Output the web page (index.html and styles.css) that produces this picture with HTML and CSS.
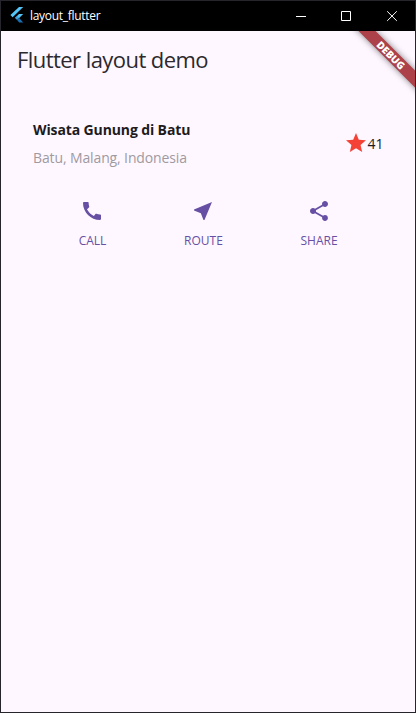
FILE: index.html
```html
<!DOCTYPE html>
<html lang="en">
<head>
<meta charset="utf-8">
<title>layout_flutter</title>
<link rel="stylesheet" href="styles.css">
</head>
<body>
<div class="window">
  <header class="titlebar">
    <svg class="logo" width="14" height="16" viewBox="0 0 14 16"><path fill="#54c5f8" d="M9 0H13.2L2.6 10.2L.4 8Z"/><path fill="#54c5f8" d="M9 7H13.2L9.2 11L5 11Z"/><path fill="#3aa0dc" d="M5 11L7.1 8.9L9.2 11L7.1 13.1Z"/><path fill="#1b6fb0" d="M7.1 13.1L9.2 11L13.2 15.4H9.2Z"/></svg>
    <span class="caption">layout_flutter</span>
    <div class="controls">
      <svg width="46" height="29" viewBox="0 0 46 29"><path d="M19 14.5H29"/></svg>
      <svg width="46" height="29" viewBox="0 0 46 29"><path d="M18.5 9.5H27.5V18.5H18.5Z"/></svg>
      <svg width="46" height="29" viewBox="0 0 46 29"><path d="M18.2 9.3L27.8 18.9M27.8 9.3L18.2 18.9"/></svg>
    </div>
  </header>
  <main class="app">
    <div class="banner">DEBUG</div>
    <h1 class="appbar">Flutter layout demo</h1>
    <section class="place">
      <div class="names">
        <p class="name">Wisata Gunung di Batu</p>
        <p class="region">Batu, Malang, Indonesia</p>
      </div>
      <svg class="star" width="24" height="24" viewBox="0 0 24 24"><path d="M12 17.27L18.18 21l-1.64-7.03L22 9.24l-7.19-.61L12 2 9.19 8.63 2 9.24l5.46 4.73L5.82 21z"/></svg>
      <span class="count">41</span>
    </section>
    <nav class="actions">
      <div class="action call">
        <svg width="24" height="24" viewBox="0 0 24 24"><path d="M20.01 15.38c-1.23 0-2.42-.2-3.53-.56-.35-.12-.74-.03-1.01.24l-1.57 1.97c-2.83-1.35-5.48-3.9-6.89-6.83l1.95-1.66c.27-.28.35-.67.24-1.02-.37-1.11-.56-2.3-.56-3.53 0-.54-.45-.99-.99-.99H4.19C3.65 3 3 3.24 3 3.99 3 13.28 10.73 21 20.01 21c.71 0 .99-.63.99-1.18v-3.45c0-.54-.45-.99-.99-.99z"/></svg>
        <span>CALL</span>
      </div>
      <div class="action route">
        <svg width="24" height="24" viewBox="0 0 24 24"><path d="M21 3L3 10.53v.98l6.84 2.65L12.48 21h.98L21 3z"/></svg>
        <span>ROUTE</span>
      </div>
      <div class="action share">
        <svg width="24" height="24" viewBox="0 0 24 24"><path d="M18 16.08c-.76 0-1.44.3-1.96.77L8.91 12.7c.05-.23.09-.46.09-.7s-.04-.47-.09-.7l7.05-4.11c.54.5 1.25.81 2.04.81 1.66 0 3-1.34 3-3s-1.34-3-3-3-3 1.34-3 3c0 .24.04.47.09.7L8.04 9.81C7.5 9.31 6.79 9 6 9c-1.66 0-3 1.34-3 3s1.34 3 3 3c.79 0 1.5-.31 2.04-.81l7.12 4.16c-.05.21-.08.43-.08.65 0 1.61 1.31 2.92 2.92 2.92 1.61 0 2.92-1.31 2.92-2.92s-1.31-2.92-2.92-2.92z"/></svg>
        <span>SHARE</span>
      </div>
    </nav>
  </main>
</div>
</body>
</html>
```
FILE: styles.css
```css
* { box-sizing: border-box; margin: 0; padding: 0; }
body { font-family: "Open Sans", "Noto Sans", sans-serif; background: #26232b; overflow: hidden; }
svg { display: block; flex: none; }
.window { width: 416px; height: 713px; border: 1px solid #26252c; display: flex; flex-direction: column; }
.titlebar { height: 30px; flex: none; background: #000; display: flex; align-items: center; padding-left: 9px; color: #fff; }
.logo { margin-top: -2px; }
.caption { font-size: 12px; line-height: 16px; margin-left: 6px; letter-spacing: -0.3px; }
.controls { display: flex; margin-left: auto; }
.controls path { fill: none; stroke: #fff; stroke-width: 1; }
.app { flex: 1; background: #fef7ff; position: relative; overflow: hidden; color: #1d1b20; white-space: nowrap; }
.banner { position: absolute; top: 18px; right: -56px; width: 160px; height: 12px; transform: rotate(45deg); background: #ac4149; box-shadow: 0 0 6px rgba(0, 0, 0, .5); color: #fff; font-size: 10.2px; font-weight: 800; line-height: 13px; text-align: center; }
.appbar { height: 56px; padding-left: 16px; font-size: 22px; line-height: 57px; font-weight: 400; letter-spacing: -0.56px; color: #2b292e; }
.place { display: flex; align-items: center; padding: 32px 31.5px 32px 32px; height: 112px; }
.names { flex: 1; padding-top: 2px; }
.name { font-size: 14px; font-weight: 700; line-height: 20px; margin-bottom: 8px; letter-spacing: -0.12px; }
.region { font-size: 14px; line-height: 20px; color: #9e9a9f; letter-spacing: -0.12px; }
.star { fill: #f44336; }
.count { font-size: 14px; line-height: 20px; width: 16px; padding-top: 2px; }
.actions { display: flex; justify-content: space-evenly; color: #6750a4; }
.action { display: flex; flex-direction: column; align-items: center; }
.action svg { fill: #6750a4; margin-left: -1px; }
.action span { font-size: 12px; line-height: 18px; margin-top: 9px; }
.call { width: 29px; }
.route { width: 39px; }
.share { width: 38px; }
```
